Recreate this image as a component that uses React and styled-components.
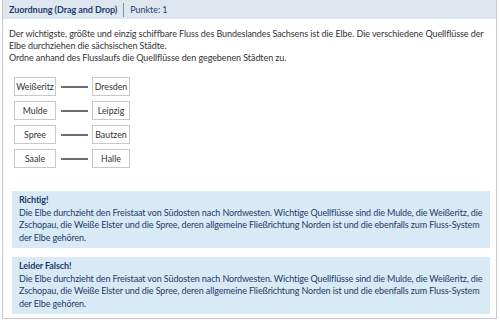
import React from 'react';
import styled, { createGlobalStyle } from 'styled-components';

const Global = createGlobalStyle`
  body {
    margin: 0;
    background: #ffffff;
    font-family: "Lato", "Liberation Sans", sans-serif;
  }
`;

const Panel = styled.div`
  width: 495px;
  height: 319px;
  margin: 0 0 0 2px;
  border: 1px solid #c8c8c8;
  border-top: none;
  box-sizing: border-box;
  background: #fff;
`;

const Header = styled.div`
  display: flex;
  align-items: center;
  height: 19px;
  background: #dee6ef;
  padding: 0 8px 0 6px;
  font-size: 9px;
  letter-spacing: -0.05px;
  color: #1f3f6e;
`;

const Title = styled.span`
  font-weight: 700;
  padding-right: 6px;
  border-right: 1px solid #7d8fa8;
  line-height: 14px;
`;

const Points = styled.span`
  padding-left: 6px;
`;

const Body = styled.div`
  padding: 9px 6px 0 6px;
`;

const Intro = styled.p`
  margin: 0;
  font-size: 9px;
  letter-spacing: -0.08px;
  line-height: 12px;
  color: #333;
`;

const Pairs = styled.div`
  display: flex;
  flex-direction: column;
  gap: 5px;
  margin: 13px 0 0 5px;
`;

const PairRow = styled.div`
  display: flex;
  align-items: center;
`;

const Chip = styled.div`
  width: ${p => p.w}px;
  height: 19px;
  box-sizing: border-box;
  border: 1px solid #c9c9c9;
  display: flex;
  align-items: center;
  justify-content: center;
  font-size: 8.8px;
  color: #333;
`;

const Link = styled.div`
  width: 27px;
  height: 2px;
  background: #6e6e6e;
  margin: 0 4px 0 5px;
`;

const Feedback = styled.div`
  background: #d8eaf5;
  margin: ${p => p.top}px 0 0 3px;
  padding: 3px 3px 4px 7px;
  font-size: 9px;
  letter-spacing: -0.12px;
  line-height: 12.5px;
  color: #1f3a6a;
`;

const FeedbackTitle = styled.div`
  font-weight: 700;
`;

const pairs = [
  ['Weißeritz', 'Dresden'],
  ['Mulde', 'Leipzig'],
  ['Spree', 'Bautzen'],
  ['Saale', 'Halle'],
];

const explanation =
  'Die Elbe durchzieht den Freistaat von Südosten nach Nordwesten. Wichtige Quellflüsse sind die Mulde, die Weißeritz, die Zschopau, die Weiße Elster und die Spree, deren allgemeine Fließrichtung Norden ist und die ebenfalls zum Fluss-System der Elbe gehören.';

export default function App() {
  return (
    <>
      <Global />
      <Panel>
        <Header>
          <Title>Zuordnung (Drag and Drop)</Title>
          <Points>Punkte: 1</Points>
        </Header>
        <Body>
          <Intro>
            Der wichtigste, größte und einzig schiffbare Fluss des Bundeslandes Sachsens ist die Elbe. Die verschiedene Quellflüsse der Elbe durchziehen die sächsischen Städte.
            <br />
            Ordne anhand des Flusslaufs die Quellflüsse den gegebenen Städten zu.
          </Intro>
          <Pairs>
            {pairs.map(([river, city]) => (
              <PairRow key={river}>
                <Chip w={42}>{river}</Chip>
                <Link />
                <Chip w={38}>{city}</Chip>
              </PairRow>
            ))}
          </Pairs>
          <Feedback top={23}>
            <FeedbackTitle>Richtig!</FeedbackTitle>
            {explanation}
          </Feedback>
          <Feedback top={9}>
            <FeedbackTitle>Leider Falsch!</FeedbackTitle>
            {explanation}
          </Feedback>
        </Body>
      </Panel>
    </>
  );
}
